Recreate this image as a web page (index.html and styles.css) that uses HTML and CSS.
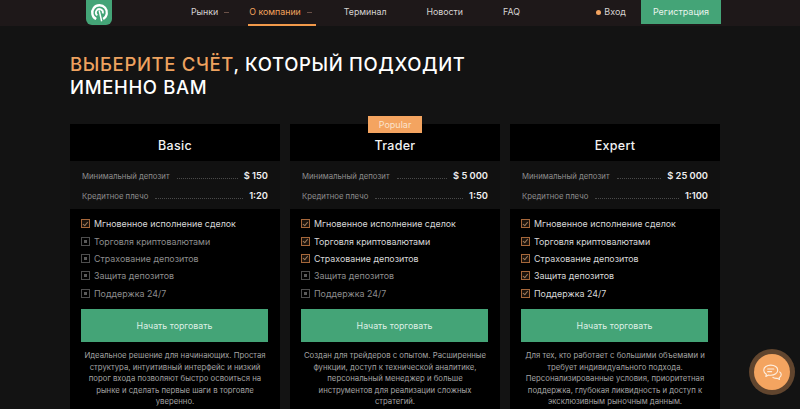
FILE: index.html
```html
<!doctype html>
<html lang="ru">

<head>
    <meta charset="UTF-8">
    <meta name="viewport" content="width=device-width, initial-scale=1.0">
    <title>Выберите счёт</title>
    <link rel="stylesheet" href="styles.css">
</head>

<body>
    <header class="topbar">
        <div class="topbar-inner">
            <a class="logo" href="#">
                <svg viewBox="0 0 26 26" width="19" height="19">
                    <path d="M8.500 22 A10 10 0 1 1 18 21.800" fill="none" stroke="#fff" stroke-width="3.200"/>
                    <path d="M10 17 A4.800 4.800 0 1 1 17.500 14.500" fill="none" stroke="#fff" stroke-width="2.400"/>
                    <path d="M12.500 10 L16 25" fill="none" stroke="#fff" stroke-width="2"/>
                </svg>
            </a>
            <nav class="nav">
                <a class="nav-link nav-drop" href="#">Рынки</a>
                <a class="nav-link nav-drop nav-active" href="#">О компании</a>
                <a class="nav-link" href="#">Терминал</a>
                <a class="nav-link" href="#">Новости</a>
                <a class="nav-link" href="#">FAQ</a>
            </nav>
            <a class="login" href="#"><span class="login-dot"></span>Вход</a>
            <a class="register" href="#">Регистрация</a>
        </div>
    </header>

    <main class="content">
        <h1 class="title"><span class="accent">Выберите счёт</span>, который подходит<br>именно вам</h1>

        <div class="plans">
            <section class="plan">
                <h2 class="plan-name">Basic</h2>
                <div class="specs">
                    <div class="spec"><span class="spec-label">Минимальный депозит</span><span class="spec-dots"></span><b class="spec-value">$ 150</b></div>
                    <div class="spec"><span class="spec-label">Кредитное плечо</span><span class="spec-dots"></span><b class="spec-value">1:20</b></div>
                </div>
                <ul class="features">
                    <li class="feature on"><span class="box"></span>Мгновенное исполнение сделок</li>
                    <li class="feature"><span class="box"></span>Торговля криптовалютами</li>
                    <li class="feature"><span class="box"></span>Страхование депозитов</li>
                    <li class="feature"><span class="box"></span>Защита депозитов</li>
                    <li class="feature"><span class="box"></span>Поддержка 24/7</li>
                </ul>
                <a class="start" href="#">Начать торговать</a>
                <p class="plan-text">Идеальное решение для начинающих. Простая структура, интуитивный интерфейс и низкий порог входа позволяют быстро освоиться на рынке и сделать первые шаги в торговле уверенно.</p>
            </section>

            <section class="plan">
                <span class="badge">Popular</span>
                <h2 class="plan-name">Trader</h2>
                <div class="specs">
                    <div class="spec"><span class="spec-label">Минимальный депозит</span><span class="spec-dots"></span><b class="spec-value">$ 5 000</b></div>
                    <div class="spec"><span class="spec-label">Кредитное плечо</span><span class="spec-dots"></span><b class="spec-value">1:50</b></div>
                </div>
                <ul class="features">
                    <li class="feature on"><span class="box"></span>Мгновенное исполнение сделок</li>
                    <li class="feature on"><span class="box"></span>Торговля криптовалютами</li>
                    <li class="feature on"><span class="box"></span>Страхование депозитов</li>
                    <li class="feature"><span class="box"></span>Защита депозитов</li>
                    <li class="feature"><span class="box"></span>Поддержка 24/7</li>
                </ul>
                <a class="start" href="#">Начать торговать</a>
                <p class="plan-text">Создан для трейдеров с опытом. Расширенные функции, доступ к технической аналитике, персональный менеджер и больше инструментов для реализации сложных стратегий.</p>
            </section>

            <section class="plan">
                <h2 class="plan-name">Expert</h2>
                <div class="specs">
                    <div class="spec"><span class="spec-label">Минимальный депозит</span><span class="spec-dots"></span><b class="spec-value">$ 25 000</b></div>
                    <div class="spec"><span class="spec-label">Кредитное плечо</span><span class="spec-dots"></span><b class="spec-value">1:100</b></div>
                </div>
                <ul class="features">
                    <li class="feature on"><span class="box"></span>Мгновенное исполнение сделок</li>
                    <li class="feature on"><span class="box"></span>Торговля криптовалютами</li>
                    <li class="feature on"><span class="box"></span>Страхование депозитов</li>
                    <li class="feature on"><span class="box"></span>Защита депозитов</li>
                    <li class="feature on"><span class="box"></span>Поддержка 24/7</li>
                </ul>
                <a class="start" href="#">Начать торговать</a>
                <p class="plan-text">Для тех, кто работает с большими объемами и требует индивидуального подхода. Персонализированные условия, приоритетная поддержка, глубокая ликвидность и доступ к эксклюзивным рыночным данным.</p>
            </section>
        </div>
    </main>

    <a class="chat" href="#">
        <svg viewBox="0 0 24 24" width="21" height="21" fill="none" stroke="#fdeee0" stroke-width="1.300" stroke-linejoin="round">
            <path d="M10 3.500c-4.400 0-8 2.600-8 5.800 0 1.900 1.200 3.500 3 4.600l-.6 2.600 3-1.700c.8.200 1.700.300 2.600.300 4.400 0 8-2.600 8-5.800s-3.600-5.800-8-5.800z"/>
            <path d="M6.500 8h7M6.500 11h4.500" stroke-linecap="round"/>
            <path d="M19.800 11c1.300.8 2.200 2 2.200 3.400 0 1.500-1 2.700-2.400 3.500l.4 2.100-2.700-1.400c-2 .3-4-.2-5.300-1.300"/>
        </svg>
    </a>
</body>

</html>
```

FILE: styles.css
```css
body {
    background-color: #131313;
    font-family: 'Inter', 'Liberation Sans', sans-serif;
    color: #e0e0e0;
    margin: 0;
    padding: 0;
    height: 409px;
    overflow: hidden;
}

a {
    text-decoration: none;
}

.topbar {
    background-color: #1e1819;
    height: 26px;
}

.topbar-inner {
    display: flex;
    align-items: flex-start;
    width: 635px;
    margin-left: 86px;
    height: 26px;
}

.logo {
    width: 26px;
    height: 25px;
    background-color: #44a477;
    border-radius: 0 0 6px 6px;
    display: flex;
    align-items: center;
    justify-content: center;
    flex-shrink: 0;
}

.nav {
    display: flex;
    margin-left: 79px;
    height: 26px;
}

.nav-link {
    font-size: 8.800px;
    line-height: 24px;
    color: #d6d3d2;
    margin-right: 40px;
    height: 26px;
    box-sizing: border-box;
    white-space: nowrap;
}

.nav-drop::after {
    content: "";
    display: inline-block;
    width: 5px;
    height: 1px;
    margin-left: 6px;
    vertical-align: middle;
    background-color: #6b5148;
}

.nav-active {
    color: #f2a25c;
    border-bottom: 2px solid #f2994a;
    padding: 0 4px 0 1px;
    margin-left: -1px;
    margin-right: 28px;
}

.nav-link:nth-child(1) {
    margin-right: 20px;
}

.login {
    display: flex;
    align-items: center;
    font-size: 9px;
    line-height: 24px;
    color: #d6d3d2;
    margin-left: auto;
    margin-right: 15px;
}

.login-dot {
    width: 5px;
    height: 5px;
    border-radius: 50%;
    background-color: #f4a460;
    margin-right: 3px;
}

.register {
    width: 80px;
    height: 24px;
    line-height: 24px;
    text-align: center;
    font-size: 9px;
    color: #e8f3ec;
    background-color: #44a477;
}

.content {
    padding: 27px 80px 0 70px;
}

.title {
    margin: 0 0 25px 0;
    font-size: 18.500px;
    line-height: 23px;
    font-weight: 500;
    letter-spacing: 0.650px;
    color: #fff;
    text-transform: uppercase;
}

.accent {
    color: #eea25f;
}

.plans {
    display: flex;
    gap: 10px;
}

.plan {
    position: relative;
    width: 210px;
    height: 300px;
    background-color: #000;
    flex-shrink: 0;
}

.badge {
    position: absolute;
    top: -8px;
    left: 78px;
    width: 54px;
    height: 17px;
    line-height: 17px;
    text-align: center;
    font-size: 9px;
    color: #fbe3cc;
    background-color: #f4a460;
}

.plan-name {
    margin: 0;
    height: 37px;
    line-height: 44px;
    text-align: center;
    font-size: 12.500px;
    font-weight: 500;
    color: #f2f2f2;
    letter-spacing: 0.3px;
}

.specs {
    background-color: #111;
    padding: 5px 12px 0 12px;
    height: 48px;
    box-sizing: border-box;
}

.spec {
    display: flex;
    align-items: baseline;
    height: 20px;
    line-height: 20px;
}

.spec-label {
    font-size: 7.750px;
    color: #8f8f8f;
}

.spec-dots {
    flex: 1;
    margin: 0 6px 0 7px;
    border-bottom: 1px dotted #4a4a4a;
}

.spec-value {
    font-size: 9.300px;
    font-weight: 600;
    color: #efefef;
}

.features {
    list-style: none;
    margin: 0;
    padding: 6px 11px 0 11px;
    height: 100px;
    box-sizing: border-box;
}

.feature {
    display: flex;
    align-items: center;
    height: 17.400px;
    font-size: 8.900px;
    color: #8d8d8d;
}

.feature.on {
    color: #d8d8d8;
}

.box {
    position: relative;
    width: 7px;
    height: 7px;
    border: 1px solid #4e4e4e;
    margin-right: 4px;
    flex-shrink: 0;
}

.box::after {
    content: "";
    position: absolute;
    left: 2px;
    top: 2px;
    width: 3px;
    height: 3px;
    background-color: #5a5a5a;
}

.feature.on .box {
    border-color: #a5673a;
    background-color: #1a120c;
}

.feature.on .box::after {
    left: 2px;
    top: 0.500px;
    width: 2px;
    height: 3.500px;
    background: none;
    border: solid #9c7a5c;
    border-width: 0 1px 1px 0;
    transform: rotate(40deg);
}

.start {
    display: block;
    margin: 0 12px 0 11px;
    height: 33px;
    line-height: 33px;
    text-align: center;
    font-size: 8.800px;
    color: #dff0e6;
    background-color: #44a477;
}

.plan-text {
    margin: 8px 11px 0 11px;
    font-size: 7.750px;
    line-height: 11.500px;
    text-align: center;
    color: #a4a4a4;
}

.chat {
    position: fixed;
    left: 754px;
    top: 354px;
    width: 36px;
    height: 36px;
    border-radius: 50%;
    background-color: #f4a460;
    box-shadow: 0 0 0 5px rgba(244, 164, 96, 0.35);
    display: flex;
    align-items: center;
    justify-content: center;
}
```
